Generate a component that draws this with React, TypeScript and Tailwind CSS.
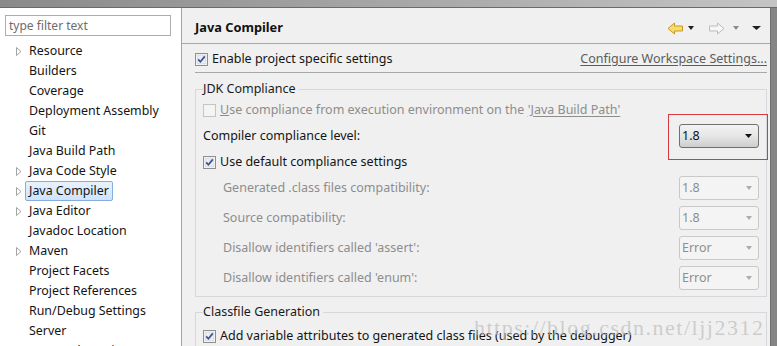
import React from 'react';

interface TreeItem {
  label: string;
  arrow?: boolean;
  selected?: boolean;
}

const tree: TreeItem[] = [
  { label: 'Resource', arrow: true },
  { label: 'Builders' },
  { label: 'Coverage' },
  { label: 'Deployment Assembly' },
  { label: 'Git' },
  { label: 'Java Build Path' },
  { label: 'Java Code Style', arrow: true },
  { label: 'Java Compiler', arrow: true, selected: true },
  { label: 'Java Editor', arrow: true },
  { label: 'Javadoc Location' },
  { label: 'Maven', arrow: true },
  { label: 'Project Facets' },
  { label: 'Project References' },
  { label: 'Run/Debug Settings' },
  { label: 'Server' },
  { label: 'Targeted Runtimes' },
];

function CheckBox({ checked, disabled }: { checked?: boolean; disabled?: boolean }) {
  return (
    <svg width="13" height="13" viewBox="0 0 13 13" className="shrink-0">
      <rect x="0.5" y="0.5" width="12" height="12" fill={disabled ? '#f4f4f4' : '#ffffff'} stroke={disabled ? '#c4c4c4' : '#8e8f8f'} />
      {!disabled && <rect x="2" y="2" width="9" height="9" fill="#e9ecf1" stroke="#c6cbd3" strokeWidth="0.6" />}
      {checked && <path d="M3.2 6.4 L5.4 8.8 L9.8 3.4" fill="none" stroke="#3d5190" strokeWidth="1.7" />}
    </svg>
  );
}

function Down({ color, w = 7 }: { color: string; w?: number }) {
  return (
    <svg width={w} height="4" viewBox={`0 0 ${w} 4`} className="shrink-0">
      <polygon points={`0,0 ${w},0 ${w / 2},4`} fill={color} />
    </svg>
  );
}

function Combo({ value, enabled }: { value: string; enabled?: boolean }) {
  return (
    <div
      className={
        enabled
          ? 'flex h-[24px] w-[80px] items-center justify-between rounded-[3px] border border-[#707070] bg-linear-to-b from-[#f3f3f3] via-[#e6e6e6] to-[#cdcdcd] pl-[2px] pr-[6px] text-[#111]'
          : 'flex h-[24px] w-[80px] items-center justify-between rounded-[3px] border border-[#c9c9c9] bg-[#f4f4f4] pl-[2px] pr-[6px] text-[#8e8e8e]'
      }
    >
      <span>{value}</span>
      {enabled ? <Down color="#111" /> : <Down color="#acacac" w={6} />}
    </div>
  );
}

function Group({ title, children, className }: { title: string; children: React.ReactNode; className?: string }) {
  return (
    <div className={`relative border border-[#d5d9dd] ${className ?? ''}`}>
      <span className="absolute left-[7px] -top-[10px] bg-[#f0f0f0] pr-[3px] leading-[18px] text-[#1a1a1a]">{title}</span>
      {children}
    </div>
  );
}

function App() {
  return (
    <div className="relative flex h-[346px] w-[777px] flex-col overflow-hidden bg-[#8c8c8c] text-[12.5px] [font-family:'Noto_Sans',sans-serif]">
      {/* window frame */}
      <div className="h-[8px] shrink-0 border-b border-[#6a6a6a] bg-linear-to-r from-[#8a8a8a] via-[#a6a6a6] to-[#c4c4c4]" />

      <div className="flex min-h-0 flex-1">
        {/* Left tree */}
        <div className="w-[182px] shrink-0 border-r border-[#a3a3a3] bg-white pt-[7px]">
          <div className="mx-[5px] flex h-[21px] w-[166px] items-center border border-[#abadb3] pl-[3px] pt-[1px] text-[12px] text-[#6d6d6d]">
            type filter text
          </div>
          <div className="mt-[5px]">
            {tree.map((item) => (
              <div key={item.label} className="flex h-[20px] items-center pl-[16px] text-[12.4px] text-[#141414]">
                <div className="flex w-[9px] shrink-0 items-center">
                  {item.arrow && (
                    <svg width="6" height="9" viewBox="0 0 6 9">
                      <polygon points="0.5,0.5 5,4.5 0.5,8.5" fill="none" stroke="#a3a3a3" />
                    </svg>
                  )}
                </div>
                <span
                  className={
                    item.selected
                      ? 'flex h-[20px] items-center rounded-[2px] border border-[#84acdd] bg-linear-to-b from-[#e8f2fe] to-[#cfe3fc] px-[3px]'
                      : 'flex h-[20px] items-center border border-transparent px-[3px]'
                  }
                >
                  {item.label}
                </span>
              </div>
            ))}
          </div>
        </div>

        {/* Right page */}
        <div className="flex min-w-0 flex-1 flex-col border-r border-[#6e6e6e] bg-[#f0f0f0] text-[#141414]">
          <div className="flex h-[36px] shrink-0 items-center justify-between border-b border-[#a8a8a8] pl-[13px] pr-[9px] pt-[5px]">
            <span className="text-[12.8px] font-bold text-[#111]">Java Compiler</span>
            <div className="flex items-center">
              <svg width="17" height="13" viewBox="0 0 17 13">
                <polygon points="1,6.5 7.5,1 7.5,4 15.5,4 15.5,9 7.5,9 7.5,12" fill="#f7dc6c" stroke="#c59a2a" />
              </svg>
              <span className="ml-[4px]"><Down color="#1e1e1e" w={6} /></span>
              <svg width="17" height="13" viewBox="0 0 17 13" className="ml-[14px]">
                <polygon points="16,6.5 9.5,1 9.5,4 1.5,4 1.5,9 9.5,9 9.5,12" fill="#f6f6f6" stroke="#bdbdbd" />
              </svg>
              <span className="ml-[8px]"><Down color="#8c8c8c" w={6} /></span>
              <span className="ml-[13px]"><Down color="#1e1e1e" w={9} /></span>
            </div>
          </div>

          <div className="ml-[13px] mr-[3px]">
            <div className="flex h-[29px] items-center justify-between border-b border-[#a8a8a8] pt-[3px]">
              <div className="flex items-center gap-[4px]">
                <CheckBox checked />
                <span>Enable project specific settings</span>
              </div>
              <span className="text-[#5c5c5c] underline underline-offset-2">Configure Workspace Settings...</span>
            </div>

            <Group title="JDK Compliance" className="mt-[16px] pb-[6px] pl-[7px] pr-[7px] pt-[7px]">
              <div className="flex h-[26px] items-center gap-[4px] text-[#8d8d8d]">
                <CheckBox disabled />
                <span>
                  <span className="underline">U</span>se compliance from execution environment on the{' '}
                  <span className="underline underline-offset-2">'Java Build Path'</span>
                </span>
              </div>
              <div className="flex h-[26px] items-center justify-between">
                <span>Compiler compliance level:</span>
                <div className="relative">
                  <Combo value="1.8" enabled />
                  <div className="absolute -bottom-[12px] -left-[11px] -right-[9px] -top-[10px] border border-[#d9383f]" />
                </div>
              </div>
              <div className="flex h-[26px] items-center gap-[4px]">
                <CheckBox checked />
                <span>Use default compliance settings</span>
              </div>
              <div className="mt-[1px] flex flex-col gap-[6px] pl-[20px] text-[#8d8d8d]">
                {[
                  ['Generated .class files compatibility:', '1.8'],
                  ['Source compatibility:', '1.8'],
                  ["Disallow identifiers called 'assert':", 'Error'],
                  ["Disallow identifiers called 'enum':", 'Error'],
                ].map(([label, value]) => (
                  <div key={label} className="flex h-[24px] items-center justify-between">
                    <span>{label}</span>
                    <Combo value={value} />
                  </div>
                ))}
              </div>
            </Group>

            <Group title="Classfile Generation" className="mt-[15px] pl-[7px] pt-[12px]">
              <div className="flex h-[22px] items-center gap-[4px]">
                <CheckBox checked />
                <span>Add variable attributes to generated class files (used by the debugger)</span>
              </div>
            </Group>
          </div>
        </div>

        <div className="w-[6px] shrink-0 bg-[#858585]" />
      </div>

      {/* watermark */}
      <div className="pointer-events-none absolute left-[474px] top-[311px] text-[22px] tracking-[1.5px] text-[#bdbdbd]/70 [font-family:'Liberation_Serif',serif]">
        https://blog.csdn.net/ljj2312
      </div>
    </div>
  );
}

export default App;
